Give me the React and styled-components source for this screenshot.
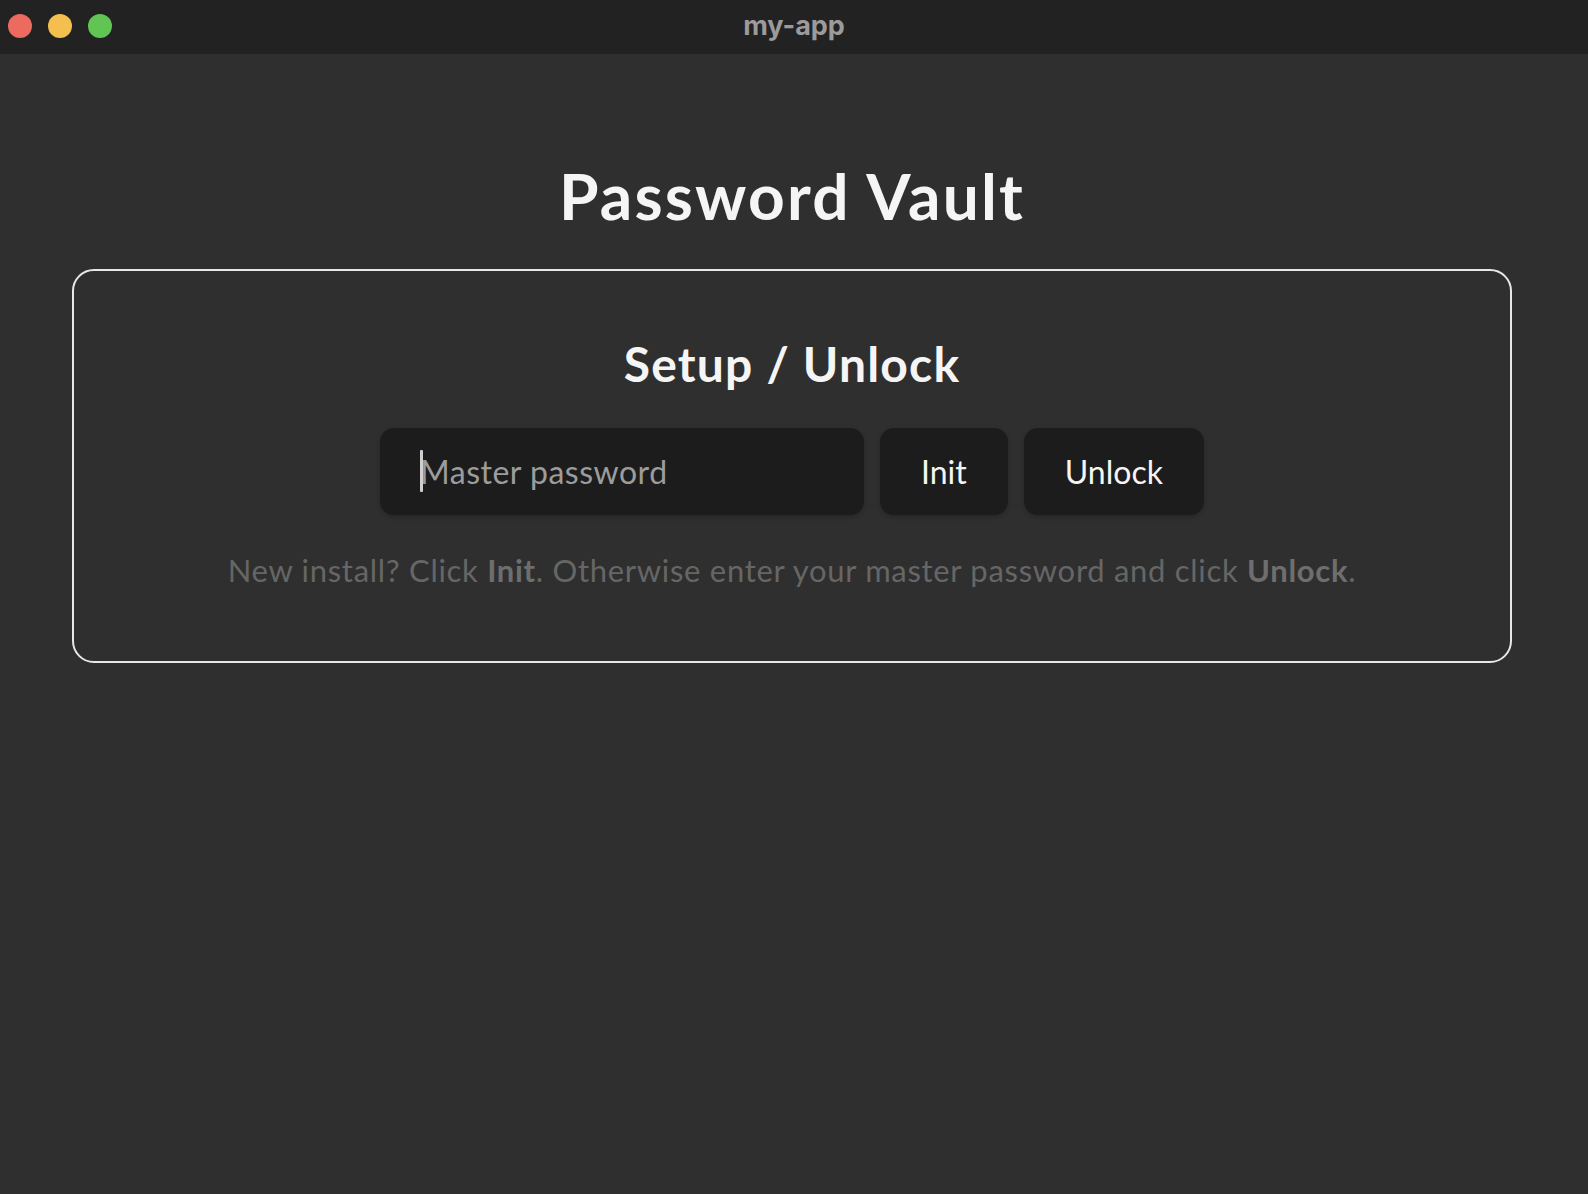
import React, { useState } from "react";
import styled, { createGlobalStyle } from "styled-components";

// macOS style window with a centered unlock card
const GlobalStyle = createGlobalStyle`
  html, body {
    margin: 0;
    padding: 0;
    background: #2f2f2f;
  }
  * {
    box-sizing: border-box;
  }
`;

export default function App() {
  const [password, setPassword] = useState("");

  return (
    <>
      <GlobalStyle />
      <Window>
        <TitleBar>
          <Lights>
            <Light color="#ec6a5e" />
            <Light color="#f4bf4f" />
            <Light color="#61c554" />
          </Lights>
          <WindowTitle>my-app</WindowTitle>
          <span />
        </TitleBar>
        <Main>
          <Heading>Password Vault</Heading>
          <Card>
            <CardTitle>Setup / Unlock</CardTitle>
            <Row>
              <InputWrap>
                <PasswordInput
                  type="password"
                  value={password}
                  onChange={(e) => setPassword(e.target.value)}
                  placeholder="Master password"
                />
                {password === "" && <Caret />}
              </InputWrap>
              <ActionButton>Init</ActionButton>
              <ActionButton>Unlock</ActionButton>
            </Row>
            <Hint>
              New install? Click <b>Init</b>. Otherwise enter your master password and click <b>Unlock</b>.
            </Hint>
          </Card>
        </Main>
      </Window>
    </>
  );
}

const Window = styled.div`
  min-height: 100vh;
  background: #2f2f2f;
  font-family: Lato, "Open Sans", sans-serif;
  color: #f5f5f5;
`;

const TitleBar = styled.div`
  height: 54px;
  background: #222222;
  display: grid;
  grid-template-columns: 1fr auto 1fr;
  align-items: center;
  padding: 0 8px;
`;

const Lights = styled.div`
  display: flex;
  gap: 16px;
  margin-top: -2px;
`;

const Light = styled.span`
  width: 24px;
  height: 24px;
  border-radius: 50%;
  background: ${(p) => p.color};
`;

const WindowTitle = styled.div`
  font-family: Inter, "Liberation Sans", sans-serif;
  font-weight: 700;
  font-size: 27px;
  color: #9b9b9b;
  margin-top: -4px;
`;

const Main = styled.main`
  padding: 104px 4px 0 0;
  display: flex;
  flex-direction: column;
  align-items: center;
`;

const Heading = styled.h1`
  margin: 0;
  font-size: 64px;
  line-height: 1.2;
  font-weight: 700;
  letter-spacing: 2.2px;
  color: #f5f5f5;
`;

const Card = styled.section`
  width: 1440px;
  margin-top: 34px;
  border: 2px solid #e8e8e8;
  border-radius: 22px;
  padding: 64px 40px 71px;
  display: flex;
  flex-direction: column;
  align-items: center;
`;

const CardTitle = styled.h2`
  margin: 0;
  font-size: 48px;
  line-height: 1.2;
  font-weight: 700;
  letter-spacing: 1.2px;
  color: #f5f5f5;
`;

const Row = styled.div`
  margin-top: 36px;
  display: flex;
  gap: 16px;
`;

const InputWrap = styled.div`
  position: relative;
`;

const PasswordInput = styled.input`
  width: 484px;
  height: 87px;
  border: none;
  outline: none;
  border-radius: 14px;
  background: #1c1c1c;
  box-shadow: 0 2px 5px rgba(0, 0, 0, 0.2);
  padding: 0 40px;
  font-family: inherit;
  font-size: 32px;
  letter-spacing: 0.5px;
  color: #f5f5f5;
  caret-color: #d8d8d8;

  &::placeholder {
    color: #9c9c9c;
  }
`;

const Caret = styled.span`
  position: absolute;
  left: 40px;
  top: 22px;
  width: 3px;
  height: 42px;
  border-radius: 1px;
  background: #cfcfcf;
  pointer-events: none;
`;

const ActionButton = styled.button`
  height: 87px;
  padding: 0 41px;
  border: none;
  border-radius: 14px;
  background: #1c1c1c;
  box-shadow: 0 2px 5px rgba(0, 0, 0, 0.2);
  font-family: inherit;
  font-size: 32px;
  color: #f5f5f5;
  cursor: pointer;
`;

const Hint = styled.p`
  margin: 37px 0 0;
  font-size: 31px;
  line-height: 1.2;
  letter-spacing: 0.7px;
  color: #666666;

  b {
    font-weight: 700;
    color: #6e6e6e;
  }
`;
